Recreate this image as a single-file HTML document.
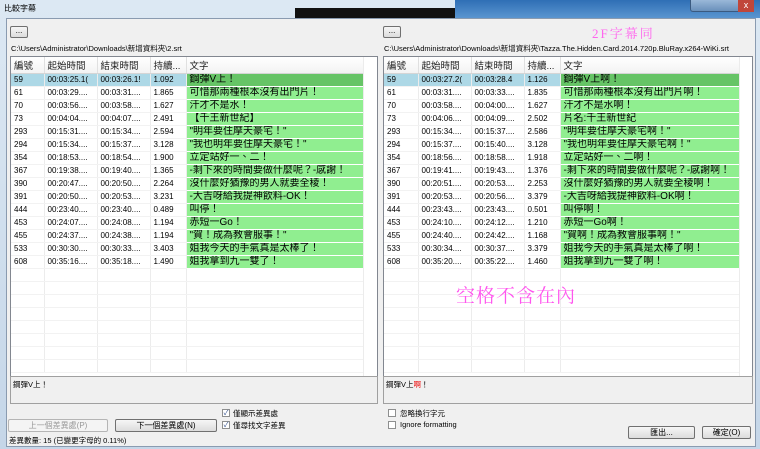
<!DOCTYPE html>
<html><head><meta charset="utf-8"><style>
*{margin:0;padding:0;box-sizing:border-box}
body{width:760px;height:449px;overflow:hidden;background:#cfdbe8;font-family:"Liberation Sans","Noto Sans CJK TC",sans-serif;font-size:8px;color:#000;position:relative}
.abs{position:absolute}
.win{left:0;top:0;width:760px;height:449px;background:linear-gradient(#dce8f3,#c5d6e8)}
.body{left:6px;top:18px;width:750px;height:429px;background:#f0f0f0;border:1px solid #8a9bb0}
.btn{position:absolute;border:1px solid #707070;border-radius:2px;background:linear-gradient(#f6f6f6,#dcdcdc);font-size:8px;text-align:center;line-height:12px}
.list{position:absolute;background:#fff;border:1px solid #828790;overflow:hidden}
table{border-collapse:collapse;table-layout:fixed;position:absolute;left:0;top:0}
td{height:13px;border-right:1px solid #ececec;border-bottom:1px solid #f2f2f2;white-space:nowrap;overflow:hidden;padding-left:3px;font-size:8px;line-height:12px}
th{height:16px;font-weight:normal;text-align:left;padding-left:3px;font-size:9.5px;border-right:1px solid #e0e0e0;border-bottom:1px solid #d5d5d5;background:linear-gradient(#fff,#f3f3f3);color:#222}
td.t{background:#90ee90;font-size:10px;border-bottom:1px solid #fff}
tr.sel td{background:#add8e6}
tr.sel td.t{background:#66c466}
.tb{position:absolute;background:#f0f0f0;border:1px solid #a0a0a0;font-size:7.5px;padding:2px 2px}
.cb{position:absolute;width:8px;height:8px;border:1px solid #8e8f8f;background:#fff;font-size:7px;line-height:7px;color:#2a4a8a;text-align:center}
.lbl{position:absolute;font-size:7.5px}
</style></head><body>
<div class="abs win"></div>
<div class="abs" style="left:295px;top:8px;width:160px;height:10px;background:#111"></div>
<div class="abs" style="left:455px;top:0;width:305px;height:18px;background:linear-gradient(#2f6fb5,#5a95d0)"></div>
<div class="abs" style="left:690px;top:0;width:64px;height:12px;border:1px solid #3a5a80;border-top:none;border-radius:0 0 3px 3px;background:linear-gradient(#9ab8d8,#6a90bb)"></div>
<div class="abs" style="left:738px;top:0;width:16px;height:12px;background:#c0463a;color:#fff;font-size:9px;text-align:center;line-height:11px">x</div>
<div class="abs" style="left:4px;top:3px;font-size:8px">比較字幕</div>
<div class="abs body"></div>

<div class="btn" style="left:10px;top:26px;width:18px;height:12px;line-height:8px">...</div>
<div class="btn" style="left:383px;top:26px;width:18px;height:12px;line-height:8px">...</div>
<div class="abs" style="left:11px;top:43px;font-size:7.5px">C:\Users\Administrator\Downloads\新增資料夾\2.srt</div>
<div class="abs" style="left:384px;top:43px;font-size:7.5px">C:\Users\Administrator\Downloads\新增資料夾\Tazza.The.Hidden.Card.2014.720p.BluRay.x264-WiKi.srt</div>
<div class="abs" style="left:592px;top:23px;font-size:13px;color:#ff66ee;font-family:'Liberation Serif','Noto Serif CJK SC',serif;letter-spacing:2px">2F字幕同</div>

<div class="list" style="left:10px;top:56px;width:368px;height:321px">
<table style="width:352px">
<colgroup><col style="width:33px"><col style="width:53px"><col style="width:53px"><col style="width:36px"><col style="width:177px"></colgroup>
<tr><th>編號</th><th>起始時間</th><th>結束時間</th><th>持續...</th><th>文字</th></tr>
<tr class="sel"><td>59</td><td>00:03:25.1(</td><td>00:03:26.1!</td><td>1.092</td><td class="t">鋼彈V上！</td></tr>
<tr><td>61</td><td>00:03:29....</td><td>00:03:31....</td><td>1.865</td><td class="t">可惜那兩種根本沒有出門片！</td></tr>
<tr><td>70</td><td>00:03:56....</td><td>00:03:58....</td><td>1.627</td><td class="t">汗才不是水！</td></tr>
<tr><td>73</td><td>00:04:04....</td><td>00:04:07....</td><td>2.491</td><td class="t">【千王新世紀】</td></tr>
<tr><td>293</td><td>00:15:31....</td><td>00:15:34....</td><td>2.594</td><td class="t">"明年要住摩天豪宅！"</td></tr>
<tr><td>294</td><td>00:15:34....</td><td>00:15:37....</td><td>3.128</td><td class="t">"我也明年要住摩天豪宅！"</td></tr>
<tr><td>354</td><td>00:18:53....</td><td>00:18:54....</td><td>1.900</td><td class="t">立定站好一、二！</td></tr>
<tr><td>367</td><td>00:19:38....</td><td>00:19:40....</td><td>1.365</td><td class="t">-剩下來的時間要做什麼呢？-感謝！</td></tr>
<tr><td>390</td><td>00:20:47....</td><td>00:20:50....</td><td>2.264</td><td class="t">沒什麼好猶豫的男人就要全稜！</td></tr>
<tr><td>391</td><td>00:20:50....</td><td>00:20:53....</td><td>3.231</td><td class="t">-大吉呀給我提神飲料-OK！</td></tr>
<tr><td>444</td><td>00:23:40....</td><td>00:23:40....</td><td>0.489</td><td class="t">叫停！</td></tr>
<tr><td>453</td><td>00:24:07....</td><td>00:24:08....</td><td>1.194</td><td class="t">赤短一Go！</td></tr>
<tr><td>455</td><td>00:24:37....</td><td>00:24:38....</td><td>1.194</td><td class="t">"賀！成為教會服事！"</td></tr>
<tr><td>533</td><td>00:30:30....</td><td>00:30:33....</td><td>3.403</td><td class="t">姐我今天的手氣真是太棒了！</td></tr>
<tr><td>608</td><td>00:35:16....</td><td>00:35:18....</td><td>1.490</td><td class="t">姐我拿到九一雙了！</td></tr>
<tr><td></td><td></td><td></td><td></td><td></td></tr><tr><td></td><td></td><td></td><td></td><td></td></tr><tr><td></td><td></td><td></td><td></td><td></td></tr><tr><td></td><td></td><td></td><td></td><td></td></tr><tr><td></td><td></td><td></td><td></td><td></td></tr><tr><td></td><td></td><td></td><td></td><td></td></tr><tr><td></td><td></td><td></td><td></td><td></td></tr><tr><td></td><td></td><td></td><td></td><td></td></tr>
</table>
<div class="abs" style="left:352px;top:0;width:1px;height:321px;background:#ececec"></div>
</div>

<div class="list" style="left:383px;top:56px;width:370px;height:321px">
<table style="width:355px">
<colgroup><col style="width:34px"><col style="width:53px"><col style="width:53px"><col style="width:36px"><col style="width:179px"></colgroup>
<tr><th>編號</th><th>起始時間</th><th>結束時間</th><th>持續...</th><th>文字</th></tr>
<tr class="sel"><td>59</td><td>00:03:27.2(</td><td>00:03:28.4</td><td>1.126</td><td class="t">鋼彈V上啊！</td></tr>
<tr><td>61</td><td>00:03:31....</td><td>00:03:33....</td><td>1.835</td><td class="t">可惜那兩種根本沒有出門片啊！</td></tr>
<tr><td>70</td><td>00:03:58....</td><td>00:04:00....</td><td>1.627</td><td class="t">汗才不是水啊！</td></tr>
<tr><td>73</td><td>00:04:06....</td><td>00:04:09....</td><td>2.502</td><td class="t">片名:千王新世紀</td></tr>
<tr><td>293</td><td>00:15:34....</td><td>00:15:37....</td><td>2.586</td><td class="t">"明年要住摩天豪宅啊！"</td></tr>
<tr><td>294</td><td>00:15:37....</td><td>00:15:40....</td><td>3.128</td><td class="t">"我也明年要住摩天豪宅啊！"</td></tr>
<tr><td>354</td><td>00:18:56....</td><td>00:18:58....</td><td>1.918</td><td class="t">立定站好一、二啊！</td></tr>
<tr><td>367</td><td>00:19:41....</td><td>00:19:43....</td><td>1.376</td><td class="t">-剩下來的時間要做什麼呢？-感謝啊！</td></tr>
<tr><td>390</td><td>00:20:51....</td><td>00:20:53....</td><td>2.253</td><td class="t">沒什麼好猶豫的男人就要全稜啊！</td></tr>
<tr><td>391</td><td>00:20:53....</td><td>00:20:56....</td><td>3.379</td><td class="t">-大吉呀給我提神飲料-OK啊！</td></tr>
<tr><td>444</td><td>00:23:43....</td><td>00:23:43....</td><td>0.501</td><td class="t">叫停啊！</td></tr>
<tr><td>453</td><td>00:24:10....</td><td>00:24:12....</td><td>1.210</td><td class="t">赤短一Go啊！</td></tr>
<tr><td>455</td><td>00:24:40....</td><td>00:24:42....</td><td>1.168</td><td class="t">"賀啊！成為教會服事啊！"</td></tr>
<tr><td>533</td><td>00:30:34....</td><td>00:30:37....</td><td>3.379</td><td class="t">姐我今天的手氣真是太棒了啊！</td></tr>
<tr><td>608</td><td>00:35:20....</td><td>00:35:22....</td><td>1.460</td><td class="t">姐我拿到九一雙了啊！</td></tr>
<tr><td></td><td></td><td></td><td></td><td></td></tr><tr><td></td><td></td><td></td><td></td><td></td></tr><tr><td></td><td></td><td></td><td></td><td></td></tr><tr><td></td><td></td><td></td><td></td><td></td></tr><tr><td></td><td></td><td></td><td></td><td></td></tr><tr><td></td><td></td><td></td><td></td><td></td></tr><tr><td></td><td></td><td></td><td></td><td></td></tr><tr><td></td><td></td><td></td><td></td><td></td></tr>
</table>
<div class="abs" style="left:355px;top:0;width:1px;height:321px;background:#ececec"></div>
<div class="abs" style="left:72px;top:224px;font-size:19px;color:#ff55ee;font-family:'Liberation Serif','Noto Serif CJK SC',serif;letter-spacing:1px">空格不含在內</div>
</div>

<div class="tb" style="left:10px;top:376px;width:368px;height:28px">鋼彈V上！</div>
<div class="tb" style="left:383px;top:376px;width:370px;height:28px">鋼彈V上<span style="color:#e00">啊</span>！</div>

<div class="cb" style="left:222px;top:409px">✓</div><div class="lbl" style="left:233px;top:408px">僅顯示差異處</div>
<div class="cb" style="left:222px;top:421px">✓</div><div class="lbl" style="left:233px;top:420px">僅尋找文字差異</div>
<div class="btn" style="left:8px;top:419px;width:100px;height:13px;color:#999;border-color:#b5b5b5;background:#f4f4f4">上一個差異處(P)</div>
<div class="btn" style="left:115px;top:419px;width:102px;height:13px">下一個差異處(N)</div>
<div class="cb" style="left:388px;top:409px"></div><div class="lbl" style="left:400px;top:408px">忽略換行字元</div>
<div class="cb" style="left:388px;top:421px"></div><div class="lbl" style="left:400px;top:420px">Ignore formatting</div>
<div class="btn" style="left:628px;top:426px;width:67px;height:13px">匯出...</div>
<div class="btn" style="left:702px;top:426px;width:49px;height:13px">確定(O)</div>
<div class="lbl" style="left:9px;top:435px">差異數量: 15 (已變更字母的 0.11%)</div>
</body></html>
